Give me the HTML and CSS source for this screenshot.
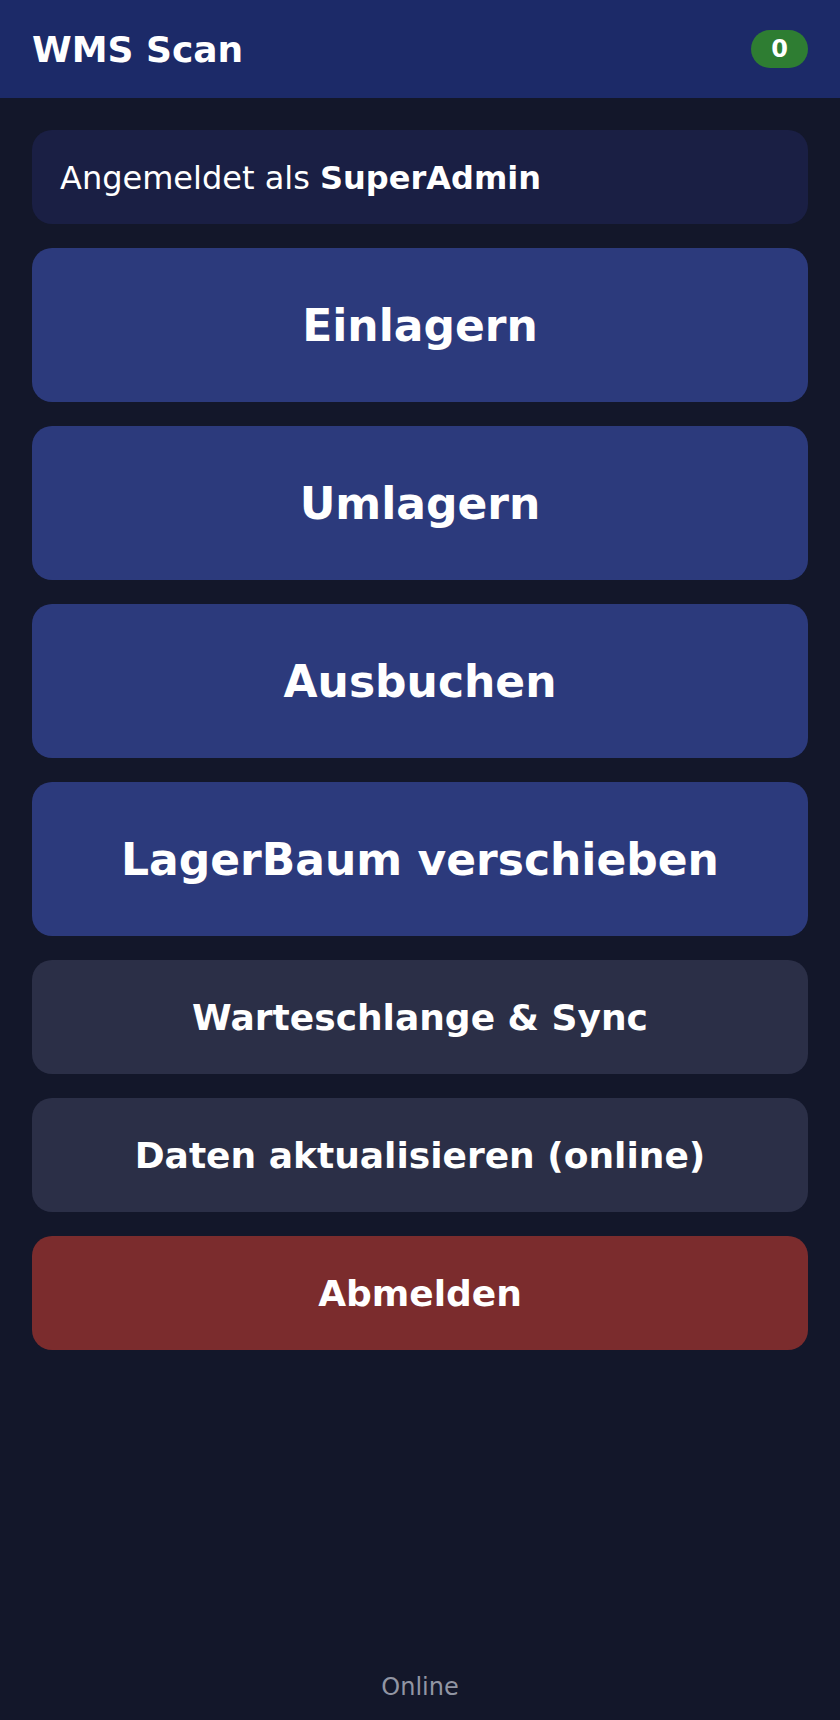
FILE: index.html
```html
<!DOCTYPE html>
<html lang="de">

<head>
    <meta charset="UTF-8">
    <meta name="viewport" content="width=device-width, initial-scale=1.0">
    <title>WMS Scan</title>
    <link rel="stylesheet" href="styles.css">
</head>

<body>
    <!-- Top bar -->
    <header class="topbar">
        <h1 class="app-title">WMS Scan</h1>
        <span class="queue-badge">0</span>
    </header>

    <main class="menu">
        <div class="user-card">Angemeldet als <strong>SuperAdmin</strong></div>

        <a href="#einlagern" class="menu-btn primary">Einlagern</a>
        <a href="#umlagern" class="menu-btn primary">Umlagern</a>
        <a href="#ausbuchen" class="menu-btn primary">Ausbuchen</a>
        <a href="#lagerbaum" class="menu-btn primary">LagerBaum verschieben</a>

        <a href="#queue" class="menu-btn secondary">Warteschlange &amp; Sync</a>
        <a href="#refresh" class="menu-btn secondary">Daten aktualisieren (online)</a>
        <a href="#logout" class="menu-btn danger">Abmelden</a>
    </main>

    <footer class="status">Online</footer>
</body>

</html>
```

FILE: styles.css
```css
html, body {
    margin: 0;
    padding: 0;
}

body {
    font-family: "DejaVu Sans", sans-serif;
    background-color: #13172a;
    color: #ffffff;
    min-height: 100vh;
    display: flex;
    flex-direction: column;
}

/* Header */
.topbar {
    height: 98px;
    padding: 0 32px;
    background-color: #1c2a68;
    display: flex;
    align-items: center;
    justify-content: space-between;
    box-sizing: border-box;
}

.app-title {
    margin: 0;
    font-size: 36px;
    font-weight: bold;
}

.queue-badge {
    height: 38px;
    line-height: 38px;
    padding: 0 20px;
    border-radius: 19px;
    background-color: #2e7d32;
    font-size: 24px;
    font-weight: bold;
}

/* Menu */
.menu {
    padding: 32px 32px 0;
    display: flex;
    flex-direction: column;
    gap: 24px;
}

.user-card {
    padding: 29px 28px 27px;
    border-radius: 20px;
    background-color: #1a1f44;
    font-size: 32px;
    line-height: 38px;
}

.menu-btn {
    display: block;
    border-radius: 20px;
    color: #ffffff;
    text-align: center;
    text-decoration: none;
    font-weight: bold;
}

.menu-btn.primary {
    padding: 52px 20px 50px;
    font-size: 44px;
    line-height: 52px;
    background-color: #2c3a7c;
}

.menu-btn.secondary,
.menu-btn.danger {
    padding: 37px 20px 35px;
    font-size: 36px;
    line-height: 42px;
}

.menu-btn.secondary {
    background-color: #2b2f47;
}

.menu-btn.danger {
    background-color: #7b2c2d;
}

/* Footer status */
.status {
    margin-top: auto;
    padding: 12px 0 19px;
    text-align: center;
    font-size: 24px;
    color: #9195a3;
}
```
